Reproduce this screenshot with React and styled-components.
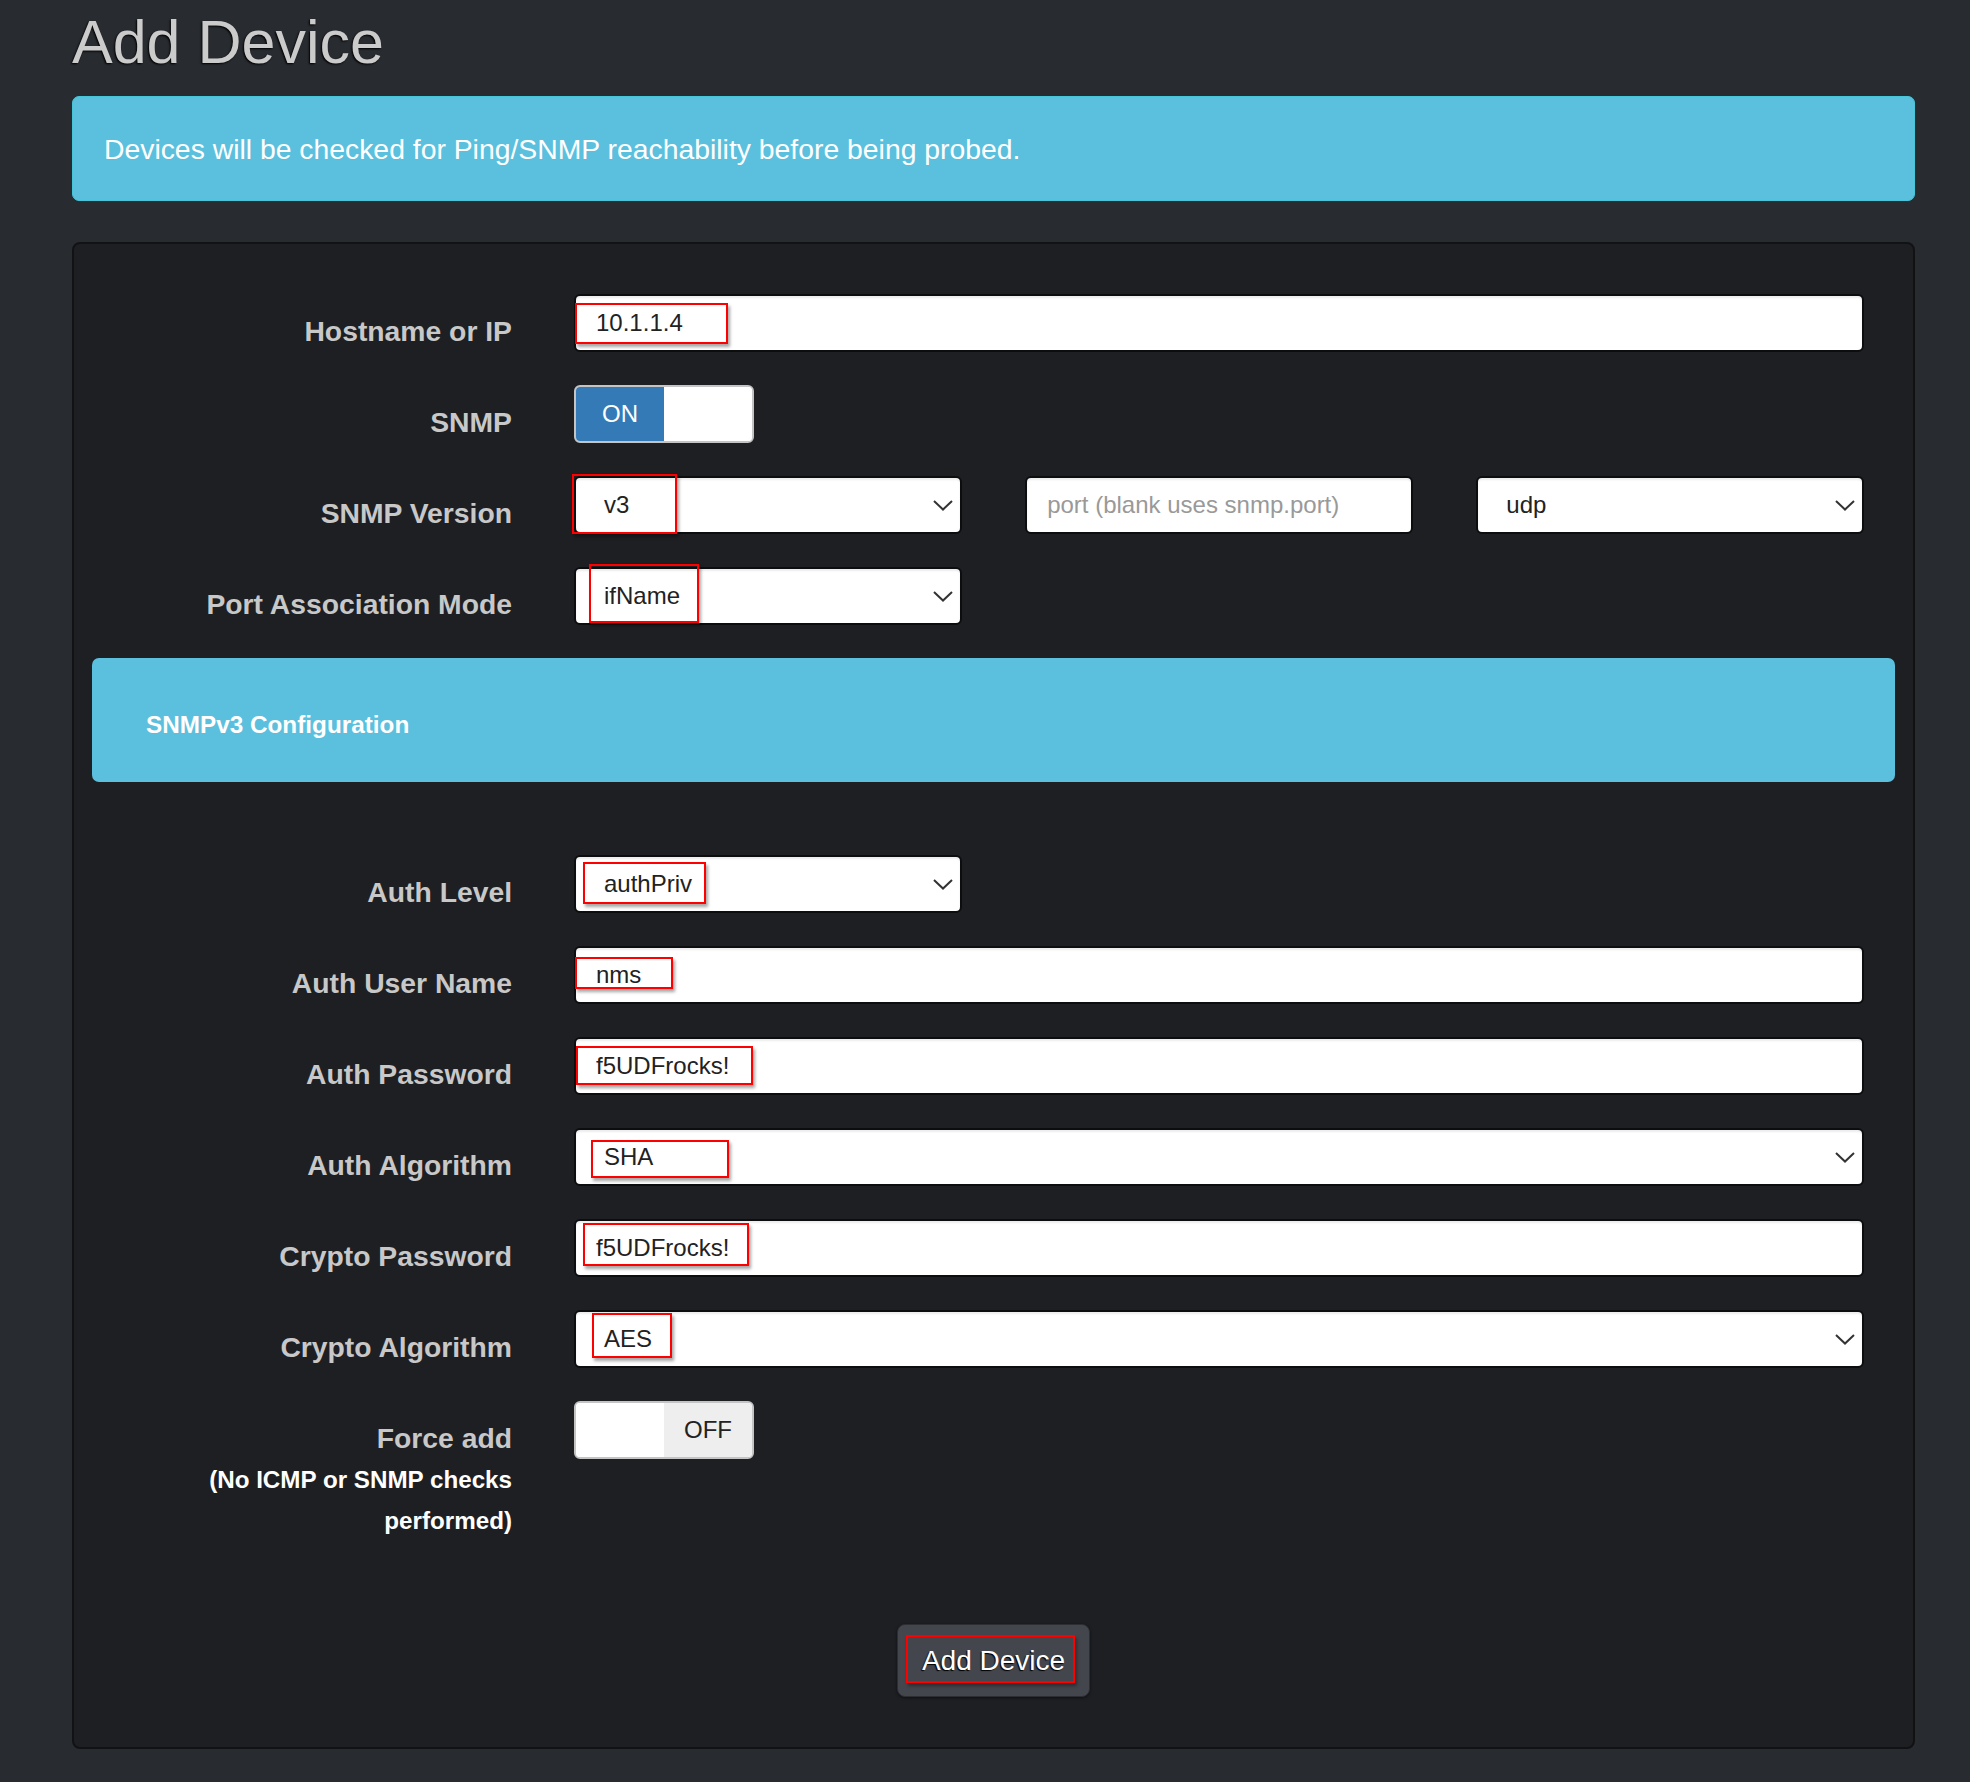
import React from 'react';
import styled, { createGlobalStyle } from 'styled-components';

const GlobalStyle = createGlobalStyle`
  body {
    margin: 0;
    background: #282b30;
    font-family: "Liberation Sans", Arial, sans-serif;
  }
`;

const Page = styled.div`
  box-sizing: border-box;
  min-height: 100vh;
  padding: 0 55px 33px 72px;
`;

const Title = styled.h1`
  margin: 9px 0 21px;
  font-size: 61px;
  line-height: 66px;
  font-weight: normal;
  color: #cbcbcb;
  text-shadow: -1px 1px 2px #000;
`;

const Alert = styled.div`
  background: #5bc0de;
  border: 1px solid #46c4d8;
  border-radius: 7px;
  padding: 32px 31px 31px;
  color: #fff;
  font-size: 28.35px;
  line-height: 40px;
`;

const Panel = styled.div`
  margin-top: 41px;
  border: 2px solid #111214;
  border-radius: 8px;
  background: #1e1f23;
  padding: 50px 18px;
`;

const Row = styled.div`
  display: grid;
  grid-template-columns: 420px 1fr;
  column-gap: 62px;
  padding-right: 31px;
  margin-bottom: ${p => p.$last ? '0' : '33px'};
`;

const Label = styled.label`
  text-align: right;
  font-weight: bold;
  font-size: 28.3px;
  line-height: 41px;
  padding-top: 17px;
  color: #c8c8c8;
`;

const Note = styled.span`
  display: block;
  font-size: 24.2px;
  color: #fff;
`;

const Columns = styled.div`
  display: grid;
  grid-template-columns: repeat(3, 1fr);
  column-gap: 63.5px;
`;

const Field = styled.div`
  position: relative;
  box-sizing: border-box;
  height: 58px;
  display: flex;
  align-items: center;
  padding: 0 ${p => p.$select ? '28px' : '20px'};
  border: 2px solid #0c0d0f;
  border-radius: 6px;
  background: #fff;
  box-shadow: inset 0 2px 2px rgba(0, 0, 0, 0.08);
  font-size: 24px;
  color: ${p => p.$placeholder ? '#999' : '#222'};
`;

const Chevron = styled.svg`
  position: absolute;
  right: 7px;
  top: 50%;
  margin-top: -5px;
`;

const Mark = styled.span`
  position: absolute;
  box-sizing: border-box;
  border: 2px solid #f00;
  box-shadow: 2px 3px 3px rgba(0, 0, 0, 0.35);
  pointer-events: none;
`;

const Banner = styled.div`
  margin: 0 0 73px;
  background: #5bc0de;
  border-radius: 7px;
  padding: 50px 54px 40px;
  color: #fff;
  font-weight: bold;
  font-size: 24.3px;
  line-height: 34px;
`;

const Toggle = styled.div`
  display: flex;
  box-sizing: border-box;
  width: 180px;
  height: 58px;
  border: 2px solid #c4c4c4;
  border-radius: 6px;
  overflow: hidden;
  background: #fff;
`;

const ToggleHalf = styled.span`
  flex: 1 1 0;
  display: flex;
  align-items: center;
  justify-content: center;
  font-size: 24px;
  background: ${p => p.$bg};
  color: ${p => p.$color};
`;

const Actions = styled.div`
  display: flex;
  justify-content: center;
  padding-top: 83px;
`;

const Button = styled.button`
  position: relative;
  box-sizing: border-box;
  width: 193px;
  height: 73px;
  border: 1px solid #2c2e33;
  border-radius: 8px;
  background: #43464c;
  box-shadow: 0 1px 3px rgba(0, 0, 0, 0.5);
  color: #fff;
  font-family: "Liberation Sans", Arial, sans-serif;
  font-size: 28px;
  text-shadow: -1px 1px 1px #000;
  cursor: pointer;
`;

const ChevronIcon = () => (
  <Chevron width="20" height="11" viewBox="0 0 20 11">
    <polyline points="1,1 10,9.5 19,1" fill="none" stroke="#333" strokeWidth="2" />
  </Chevron>
);

const Box = ({ select, placeholder, mark, children }) => (
  <Field $select={select} $placeholder={placeholder}>
    {children}
    {select && <ChevronIcon />}
    {mark && <Mark style={{ left: mark[0], top: mark[1], width: mark[2], height: mark[3] }} />}
  </Field>
);

const Switch = ({ on }) => (
  <Toggle>
    {on ? (
      <>
        <ToggleHalf $bg="#337ab7" $color="#fff">ON</ToggleHalf>
        <ToggleHalf $bg="#fff" />
      </>
    ) : (
      <>
        <ToggleHalf $bg="#fff" />
        <ToggleHalf $bg="#eee" $color="#222">OFF</ToggleHalf>
      </>
    )}
  </Toggle>
);

export default function App() {
  return (
    <Page>
      <GlobalStyle />
      <Title>Add Device</Title>
      <Alert>Devices will be checked for Ping/SNMP reachability before being probed.</Alert>

      <Panel>
        <Row>
          <Label>Hostname or IP</Label>
          <Box mark={[-1, 7, 153, 41]}>10.1.1.4</Box>
        </Row>
        <Row>
          <Label>SNMP</Label>
          <Switch on />
        </Row>
        <Row>
          <Label>SNMP Version</Label>
          <Columns>
            <Box select mark={[-4, -4, 105, 60]}>v3</Box>
            <Box placeholder>port (blank uses snmp.port)</Box>
            <Box select>udp</Box>
          </Columns>
        </Row>
        <Row>
          <Label>Port Association Mode</Label>
          <Columns>
            <Box select mark={[13, -5, 110, 59]}>ifName</Box>
          </Columns>
        </Row>

        <Banner>SNMPv3 Configuration</Banner>

        <Row>
          <Label>Auth Level</Label>
          <Columns>
            <Box select mark={[7, 5, 123, 42]}>authPriv</Box>
          </Columns>
        </Row>
        <Row>
          <Label>Auth User Name</Label>
          <Box mark={[-1, 9, 98, 32]}>nms</Box>
        </Row>
        <Row>
          <Label>Auth Password</Label>
          <Box mark={[0, 7, 177, 39]}>f5UDFrocks!</Box>
        </Row>
        <Row>
          <Label>Auth Algorithm</Label>
          <Box select mark={[15, 10, 138, 38]}>SHA</Box>
        </Row>
        <Row>
          <Label>Crypto Password</Label>
          <Box mark={[7, 2, 166, 43]}>f5UDFrocks!</Box>
        </Row>
        <Row>
          <Label>Crypto Algorithm</Label>
          <Box select mark={[16, 1, 80, 45]}>AES</Box>
        </Row>
        <Row $last>
          <Label>
            Force add
            <Note>(No ICMP or SNMP checks</Note>
            <Note>performed)</Note>
          </Label>
          <Switch />
        </Row>

        <Actions>
          <Button type="button">
            Add Device
            <Mark style={{ left: 8, top: 10, width: 169, height: 48 }} />
          </Button>
        </Actions>
      </Panel>
    </Page>
  );
}
